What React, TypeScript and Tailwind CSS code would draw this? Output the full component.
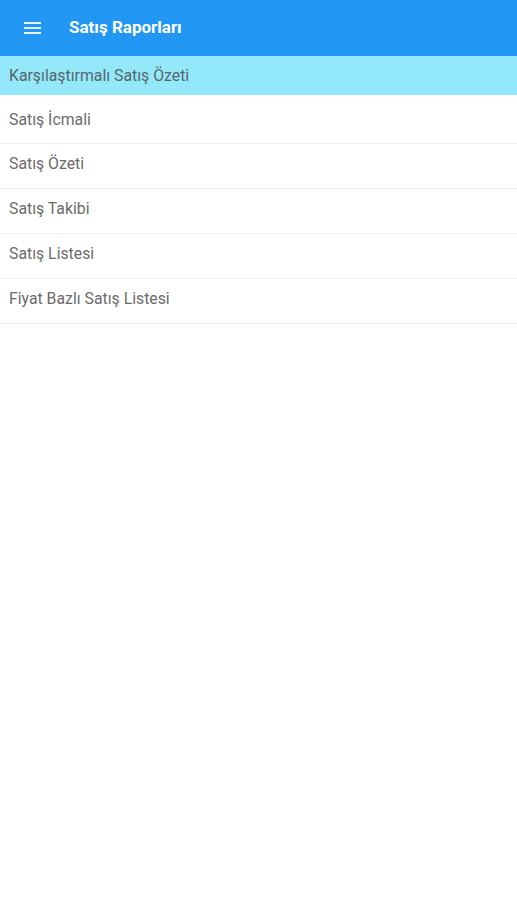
const items = ['Satış İcmali', 'Satış Özeti', 'Satış Takibi', 'Satış Listesi', 'Fiyat Bazlı Satış Listesi'];

export default function App() {
  return (
    <div className="min-h-[900px] w-full bg-white font-['Roboto',sans-serif]">
      {/* App bar */}
      <header className="flex h-[56px] items-center bg-[#2196f3] shadow-sm">
        <div className="flex w-[69px] justify-center pl-[1px]">
          <svg width="18" height="14" viewBox="0 0 18 14" className="mr-[5px]">
            <rect x="0" y="1" width="17" height="2" fill="#e3f2fd" />
            <rect x="0" y="6" width="17" height="2" fill="#e3f2fd" />
            <rect x="0" y="11" width="17" height="2" fill="#e3f2fd" />
          </svg>
        </div>
        <h1 className="text-[17px] font-bold text-white">Satış Raporları</h1>
      </header>

      {/* List */}
      <div className="flex h-[39px] items-center bg-[#93e9f9] px-[9px] text-[15.8px] text-[#55666b]">
        Karşılaştırmalı Satış Özeti
      </div>
      {items.map((item, i) => (
        <div
          key={item}
          className={
            i === 0
              ? 'flex h-[49px] items-center border-b border-[#eeeeee] px-[9px] pt-[3px] pb-[1px] text-[15.8px] text-[#6b6b6b]'
              : 'flex h-[45px] items-center border-b border-[#f0f0f0] px-[9px] pb-[4px] text-[15.8px] text-[#6b6b6b]'
          }
        >
          {item}
        </div>
      ))}
    </div>
  );
}
